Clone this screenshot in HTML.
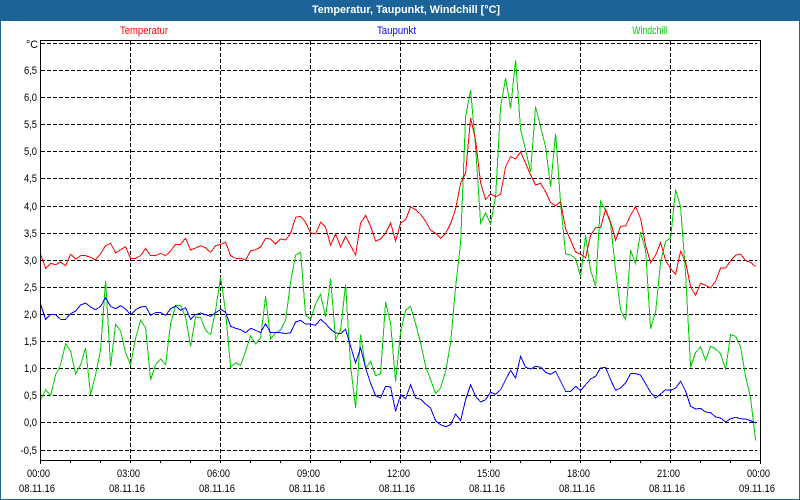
<!DOCTYPE html>
<html><head><meta charset="utf-8"><style>
html,body{margin:0;padding:0;background:#fff}
body{width:800px;height:500px;overflow:hidden}
svg{display:block}
text{font-family:"Liberation Sans",sans-serif;font-size:11px;fill:#000}
</style></head><body>
<svg width="800" height="500" viewBox="0 0 800 500" xmlns="http://www.w3.org/2000/svg">
<rect width="800" height="500" fill="#fff"/>
<rect width="800" height="21" fill="#1c6399"/>
<rect x="0" y="0" width="1" height="500" fill="#1c6399"/>
<rect x="799" y="0" width="1" height="500" fill="#1c6399"/>
<rect x="0" y="499" width="800" height="1" fill="#1c6399"/>
<text x="406" y="13" text-anchor="middle" style="font-size:11px;font-weight:bold;fill:#fff" textLength="188" lengthAdjust="spacingAndGlyphs">Temperatur, Taupunkt, Windchill [°C]</text>
<text x="144" y="34" text-anchor="middle" style="fill:#f00" textLength="48" lengthAdjust="spacingAndGlyphs">Temperatur</text>
<text x="396.5" y="34" text-anchor="middle" style="fill:#00f" textLength="39" lengthAdjust="spacingAndGlyphs">Taupunkt</text>
<text x="649.7" y="34" text-anchor="middle" style="fill:#0c0" textLength="35" lengthAdjust="spacingAndGlyphs">Windchill</text>

<g shape-rendering="crispEdges" fill="none" stroke="#000" stroke-width="1" stroke-dasharray="4 2">
<path d="M41 43.5H757M41 70.5H757M41 97.5H757M41 124.5H757M41 151.5H757M41 178.5H757M41 206.5H757M41 233.5H757M41 260.5H757M41 287.5H757M41 314.5H757M41 341.5H757M41 368.5H757M41 395.5H757M41 422.5H757M41 450.5H757"/>
<path d="M130.5 41V460M220.5 41V460M310.5 41V460M400.5 41V460M490.5 41V460M580.5 41V460M670.5 41V460"/>
</g>
<g shape-rendering="crispEdges" fill="none" stroke-width="1" transform="translate(.6 0)">
<polyline stroke="#00cc00" points="40,399.7 45,389.7 50,395.7 55,374.7 60,364.7 65,343.7 70,351.3 75,374 80,364.7 85,348 90,394.7 95,374.7 100,349.7 105,280.3 110,366.3 115,324.3 120,331 125,353 130,364.7 135,338 140,320.3 145,327.7 150,379.7 155,364.7 160,359 165,364.7 170,323.7 175,305.3 180,305.3 185,317 190,346.3 195,317 200,317.7 205,330.3 210,334.7 215,310.3 220,277 225,312 230,367.3 235,363 240,365.3 245,351.3 250,335.7 255,344 260,338 265,296.3 270,339 275,333 280,330 285,320.3 290,282 295,255.3 300,252.3 305,315.3 310,319.3 315,303.7 320,294.3 325,317 330,278.7 335,339.7 340,330 345,284.3 350,366 355,408 360,334.7 365,368 370,361.3 375,375.7 380,373.7 385,302 390,323.7 395,381.3 400,332 405,310.3 410,306.3 415,323.7 420,343 425,366.3 430,379.7 435,393.7 440,388 445,371.3 450,343 455,287 460,243 465,116.7 470,90 475,146.7 480,223 485,213 490,224 495,196.7 500,106.7 505,78.3 510,108.3 515,60 520,130 525,150 530,171.7 535,106.7 540,126.7 545,146.7 550,186.7 555,133.3 560,203.3 565,254 570,255 575,258.7 580,277 585,235.3 590,270.3 595,286 600,201.3 605,210.3 610,223.7 615,270.3 620,310.3 625,319.7 630,250.3 635,263.7 640,232 645,250.3 650,328.7 655,312 660,262 665,241.3 670,238 675,189.7 680,207 685,273.7 690,367.3 695,352.3 700,347 705,360.3 710,346.3 715,349 720,353.7 725,369.7 730,334.7 735,336.3 740,347 745,376.3 750,398 755,440.3"/>
<polyline stroke="#ff0000" points="40,254.3 45,268.3 50,263.3 55,264.7 60,262 65,265.7 70,254.3 75,259.3 80,255.7 85,255.7 90,257.3 95,260 100,253.7 105,245.7 110,243.3 115,253 120,249.7 125,246.7 130,258.3 135,258.3 140,255.7 145,248.3 150,255.7 155,255.7 160,253.3 165,255.7 170,250.7 175,244.3 180,244.3 185,238.3 190,250 195,248 200,245.7 205,247.7 210,252.3 215,245.7 220,244.3 225,242.3 230,255.7 235,258.3 240,258.3 245,260 250,250.7 255,249.7 260,247 265,238.3 270,239 275,244 280,239 285,240 290,233.3 295,217.3 300,216.3 305,222.3 310,233 315,234 320,222.3 325,227.3 330,245 335,234 340,247 345,236.3 350,245.7 355,255 360,223 365,215.3 370,226.3 375,241 380,239 385,233 390,223 395,241 400,223 405,219.7 410,207 415,209.7 420,214.3 425,221.3 430,230.3 435,233.3 440,238.3 445,233.3 450,223.7 455,209 460,183.3 465,173 470,118 475,140 480,183 485,199.3 490,194 495,196.7 500,194.3 505,166.7 510,156.7 515,159 520,151.7 525,163.3 530,175 535,185 540,183.3 545,191.7 550,202.7 555,205.7 560,201.7 565,228.7 570,240.3 575,252 580,254.3 585,257.7 590,235.3 595,227.7 600,227.7 605,209.3 610,222 615,240.3 620,226.3 625,226 630,215.3 635,206.3 640,218.7 645,245.3 650,262.7 655,255.3 660,242.7 665,260.3 670,268.7 675,274.3 680,251.3 685,262 690,287 695,295.3 700,283.3 705,285.3 710,288 715,281.3 720,268 725,268 730,260.7 735,255.3 740,254 745,260.7 750,262.3 755,266.7"/>
<polyline stroke="#0000ff" points="40,304.3 45,319.3 50,314.7 55,314.7 60,319.3 65,319.3 70,313.7 75,311 80,305 85,303 90,307 95,309.7 100,306.3 105,297.7 110,306.3 115,308.7 120,305.7 125,309 130,314.7 135,309.7 140,307 145,306.3 150,315.3 155,312.7 160,312.7 165,315.3 170,308.7 175,306 180,310.3 185,307.7 190,319.3 195,314.7 200,313 205,314.7 210,316.3 215,312.7 220,309.3 225,312.3 230,326.3 235,328.3 240,329.7 245,332.7 250,328.3 255,330.3 260,332.7 265,323.7 270,332.7 275,332.3 280,332.7 285,333.5 290,332.7 295,322 300,320.3 305,324 310,324.3 315,325.3 320,319.3 325,323.7 330,329.3 335,333 340,333.7 345,329.3 350,346.3 355,363 360,348 365,368 370,383 375,395.7 380,398 385,386.3 390,387 395,411.3 400,394.7 405,398.7 410,384.7 415,398 420,399.3 425,404 430,408 435,420.7 440,424.7 445,426.7 450,424.7 455,414 460,420.7 465,399.7 470,384.7 475,396.3 480,402 485,399.7 490,392.3 495,394.3 500,389.7 505,379.7 510,370.3 515,378 520,356.3 525,367.3 530,369 535,366.3 540,367.3 545,372.3 550,374.3 555,371.3 560,381.3 565,391.3 570,391.3 575,386.3 580,390.7 585,384.7 590,379 595,376.3 600,368 605,367.3 610,379.7 615,390.3 620,388 625,383 630,373.7 635,373.7 640,375 645,383.7 650,392.3 655,398 660,394 665,389.7 670,390.3 675,388 680,381.3 685,391.3 690,406.3 695,409 700,408.3 705,412 710,412.7 715,417 720,418 725,422 730,418.7 735,417.3 740,418.7 745,419 750,420.7 755,423"/>
</g>
<g shape-rendering="crispEdges" fill="none" stroke="#000" stroke-width="1">
<rect x="40.5" y="40.5" width="720" height="420"/>
<path d="M40.5 460V464M70.5 460V463M100.5 460V463M130.5 460V463M160.5 460V463M190.5 460V463M220.5 460V463M250.5 460V463M280.5 460V463M310.5 460V463M340.5 460V463M370.5 460V463M400.5 460V463M430.5 460V463M460.5 460V463M490.5 460V463M520.5 460V463M550.5 460V463M580.5 460V463M610.5 460V463M640.5 460V463M670.5 460V463M700.5 460V463M730.5 460V463M760.5 460V464"/>
</g>
<g text-anchor="end" lengthAdjust="spacingAndGlyphs">
<text x="38" y="48" textLength="12" lengthAdjust="spacingAndGlyphs">°C</text>
<text x="37" y="74" textLength="13" lengthAdjust="spacingAndGlyphs">6,5</text><text x="37" y="101" textLength="13" lengthAdjust="spacingAndGlyphs">6,0</text><text x="37" y="128" textLength="13" lengthAdjust="spacingAndGlyphs">5,5</text><text x="37" y="155" textLength="13" lengthAdjust="spacingAndGlyphs">5,0</text><text x="37" y="182" textLength="13" lengthAdjust="spacingAndGlyphs">4,5</text><text x="37" y="210" textLength="13" lengthAdjust="spacingAndGlyphs">4,0</text><text x="37" y="237" textLength="13" lengthAdjust="spacingAndGlyphs">3,5</text><text x="37" y="264" textLength="13" lengthAdjust="spacingAndGlyphs">3,0</text><text x="37" y="291" textLength="13" lengthAdjust="spacingAndGlyphs">2,5</text><text x="37" y="318" textLength="13" lengthAdjust="spacingAndGlyphs">2,0</text><text x="37" y="345" textLength="13" lengthAdjust="spacingAndGlyphs">1,5</text><text x="37" y="372" textLength="13" lengthAdjust="spacingAndGlyphs">1,0</text><text x="37" y="399" textLength="13" lengthAdjust="spacingAndGlyphs">0,5</text><text x="37" y="426" textLength="13" lengthAdjust="spacingAndGlyphs">0,0</text><text x="37" y="454" textLength="16.5" lengthAdjust="spacingAndGlyphs">-0,5</text>
</g>
<g text-anchor="middle">
<text x="38.5" y="477" textLength="23" lengthAdjust="spacingAndGlyphs">00:00</text><text x="128.5" y="477" textLength="23" lengthAdjust="spacingAndGlyphs">03:00</text><text x="218.5" y="477" textLength="23" lengthAdjust="spacingAndGlyphs">06:00</text><text x="308.5" y="477" textLength="23" lengthAdjust="spacingAndGlyphs">09:00</text><text x="398.5" y="477" textLength="23" lengthAdjust="spacingAndGlyphs">12:00</text><text x="488.5" y="477" textLength="23" lengthAdjust="spacingAndGlyphs">15:00</text><text x="578.5" y="477" textLength="23" lengthAdjust="spacingAndGlyphs">18:00</text><text x="668.5" y="477" textLength="23" lengthAdjust="spacingAndGlyphs">21:00</text><text x="758.5" y="477" textLength="23" lengthAdjust="spacingAndGlyphs">00:00</text>
<text x="37" y="492" textLength="36" lengthAdjust="spacingAndGlyphs">08.11.16</text><text x="127" y="492" textLength="36" lengthAdjust="spacingAndGlyphs">08.11.16</text><text x="217" y="492" textLength="36" lengthAdjust="spacingAndGlyphs">08.11.16</text><text x="307" y="492" textLength="36" lengthAdjust="spacingAndGlyphs">08.11.16</text><text x="397" y="492" textLength="36" lengthAdjust="spacingAndGlyphs">08.11.16</text><text x="487" y="492" textLength="36" lengthAdjust="spacingAndGlyphs">08.11.16</text><text x="577" y="492" textLength="36" lengthAdjust="spacingAndGlyphs">08.11.16</text><text x="667" y="492" textLength="36" lengthAdjust="spacingAndGlyphs">08.11.16</text><text x="757" y="492" textLength="36" lengthAdjust="spacingAndGlyphs">09.11.16</text>
</g>
</svg>
</body></html>
